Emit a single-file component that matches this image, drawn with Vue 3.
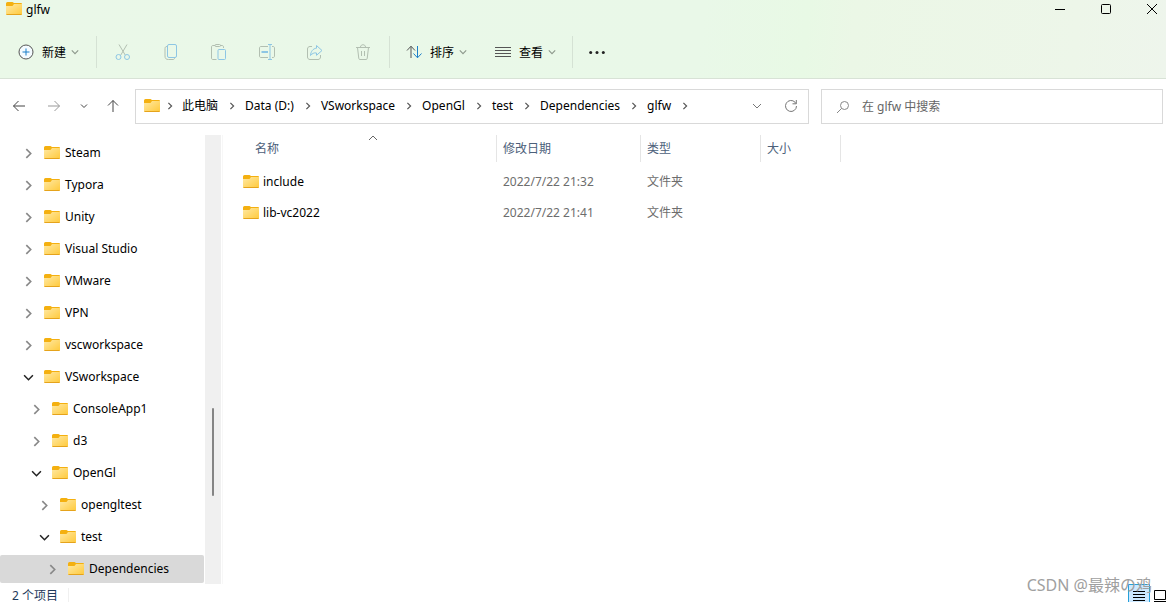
<script setup>
import { ref } from 'vue'

const query = ref('')
const crumbs = ['此电脑', 'Data (D:)', 'VSworkspace', 'OpenGl', 'test', 'Dependencies', 'glfw']

const tree = [
  { name: 'Steam', level: 0 },
  { name: 'Typora', level: 0 },
  { name: 'Unity', level: 0 },
  { name: 'Visual Studio', level: 0 },
  { name: 'VMware', level: 0 },
  { name: 'VPN', level: 0 },
  { name: 'vscworkspace', level: 0 },
  { name: 'VSworkspace', level: 0, open: true },
  { name: 'ConsoleApp1', level: 1 },
  { name: 'd3', level: 1 },
  { name: 'OpenGl', level: 1, open: true },
  { name: 'opengltest', level: 2 },
  { name: 'test', level: 2, open: true },
  { name: 'Dependencies', level: 3, selected: true },
]

const files = [
  { name: 'include', date: '2022/7/22 21:32', type: '文件夹' },
  { name: 'lib-vc2022', date: '2022/7/22 21:41', type: '文件夹' },
]
</script>

<template>
  <div class="explorer">
    <svg class="defs" aria-hidden="true">
      <defs>
        <linearGradient id="folder-front" x1="0" y1="0" x2="1" y2="1">
          <stop offset="0" stop-color="#ffe9a4" />
          <stop offset="1" stop-color="#ffc93a" />
        </linearGradient>
        <symbol id="folder" viewBox="0 0 16 14">
          <path d="M0 1.500A1.500 1.500 0 0 1 1.500 0h5L8 1h7a1 1 0 0 1 1 1v3H0z" fill="#f4b010" />
          <path d="M0 4h6.500L8 2h8v10.200a.8.8 0 0 1-.8.8H.8a.8.8 0 0 1-.8-.8z" fill="url(#folder-front)" />
          <path d="M.5 12.500h15" stroke="#e5a31c" stroke-width="1" />
        </symbol>
        <symbol id="right" viewBox="0 0 10 10">
          <path d="M3 1l4 4-4 4" fill="none" stroke="currentColor" stroke-width="1.500" />
        </symbol>
        <symbol id="down" viewBox="0 0 10 10">
          <path d="M1 3l4 4 4-4" fill="none" stroke="currentColor" stroke-width="1.400" />
        </symbol>
      </defs>
    </svg>

    <header class="top">
      <div class="titlebar">
        <svg class="folder"><use href="#folder" /></svg>
        <h1>glfw</h1>
        <div class="window-buttons">
          <button aria-label="最小化"><svg viewBox="0 0 12 12"><path d="M1 6.500h10" /></svg></button>
          <button aria-label="最大化"><svg viewBox="0 0 12 12"><rect x="1.500" y="1.500" width="9" height="9" rx="1" /></svg></button>
          <button aria-label="关闭"><svg viewBox="0 0 12 12"><path d="M1 1l10 10M11 1L1 11" /></svg></button>
        </div>
      </div>

      <div class="toolbar">
        <button class="command new">
          <svg class="icon" viewBox="0 0 16 16"><circle cx="8" cy="8" r="7" class="ink" fill="#f4fbff" /><path class="blue" d="M8 4.500v7M4.500 8h7" /></svg>
          <span>新建</span><svg class="chev"><use href="#down" /></svg>
        </button>
        <div class="group">
          <button disabled aria-label="剪切">
            <svg class="icon" viewBox="0 0 16 16"><path class="ink" d="M4 .5l6.200 10.500M12 .5L5.800 11" /><circle class="blue" cx="3.500" cy="13" r="2.500" /><circle class="blue" cx="12" cy="13" r="2.500" /></svg>
          </button>
          <button disabled aria-label="复制">
            <svg class="icon" viewBox="0 0 16 16"><path class="ink" d="M4 2.500c-1.500 0-2 .8-2 2V12c0 2.500 1 3.500 3.500 3.500H10c1 0 1.500-.5 1.500-1.500" /><rect class="blue" x="4.500" y=".5" width="9" height="13" rx="1.500" /></svg>
          </button>
          <button disabled aria-label="粘贴">
            <svg class="icon" viewBox="0 0 16 16"><path class="ink" d="M4 1.500H2c-1 0-1.500.5-1.500 1.500v11c0 1 .5 1.500 1.500 1.500h3.500M9 1.500h2c1 0 1.500.5 1.500 1.500v1" /><rect class="ink" x="4" y=".5" width="5.500" height="2" rx="1" /><rect class="blue" x="7" y="5.500" width="7.500" height="10" rx="1" /></svg>
          </button>
          <button disabled aria-label="重命名">
            <svg class="icon" viewBox="0 0 16 16"><path class="ink" d="M9 2.500H2c-1 0-1.500.6-1.500 1.500v8c0 1 .5 1.500 1.500 1.500h7M13 2.500h1c1 0 1.500.6 1.500 1.500v8c0 1-.5 1.500-1.500 1.500h-1" /><path class="blue" d="M11 .5v15M9 .5h4M9 15.500h4" /><path class="blue thick" d="M2.500 8H9" /></svg>
          </button>
          <button disabled aria-label="共享">
            <svg class="icon" viewBox="0 0 16 16"><path class="ink" d="M5 2.500H3C1.500 2.500.5 3.500.5 5v8c0 1.500 1 2.500 2.500 2.500h8c1.500 0 2.500-1 2.500-2.500v-2" /><path class="blue" d="M9.500 1.500L15 6.500l-5.500 4.800V9C7 8.500 5.200 9.500 3.500 11.500 3.800 7.500 6 4.500 9.500 4.200z" /></svg>
          </button>
          <button disabled aria-label="删除">
            <svg class="icon" viewBox="0 0 16 16"><path class="ink" d="M1 3.500h14M2.500 3.500l1.300 11c.1.700.5 1 1.200 1h6c.7 0 1.100-.3 1.200-1l1.300-11M5.500 3c0-3 5-3 5 0M6.500 7v5M9.500 7v5" /></svg>
          </button>
        </div>
        <button class="command">
          <svg class="icon" viewBox="0 0 16 16"><path class="ink" d="M5 14V2.500M1 6.500l4-4.300 4 4.300" /><path class="blue" d="M11.500 2v11.500M7.500 9.500l4 4.300 4-4.300" /></svg>
          <span>排序</span><svg class="chev"><use href="#down" /></svg>
        </button>
        <button class="command">
          <svg class="icon" viewBox="0 0 16 16"><path class="ink" d="M0 3.500h16M0 6.500h16M0 9.500h16M0 12.500h16" /></svg>
          <span>查看</span><svg class="chev"><use href="#down" /></svg>
        </button>
        <button class="more" aria-label="更多">
          <svg class="icon" viewBox="0 0 16 16"><circle cx="1.700" cy="8.500" r="1.500" /><circle cx="8" cy="8.500" r="1.500" /><circle cx="14.300" cy="8.500" r="1.500" /></svg>
        </button>
      </div>
    </header>

    <nav class="location">
      <div class="history">
        <button aria-label="后退"><svg viewBox="0 0 14 14"><path d="M13 7H1.500M6.500 2l-5 5 5 5" /></svg></button>
        <button aria-label="前进" class="faded"><svg viewBox="0 0 14 14"><path d="M1 7h11.500M7.500 2l5 5-5 5" /></svg></button>
        <button aria-label="最近位置" class="recent"><svg viewBox="0 0 14 14"><path d="M4 5.500l3 3 3-3" /></svg></button>
        <button aria-label="上移"><svg viewBox="0 0 14 14"><path d="M7 13V1.500M2 6.500l5-5 5 5" /></svg></button>
      </div>
      <div class="address">
        <svg class="folder"><use href="#folder" /></svg>
        <svg class="sep first"><use href="#right" /></svg>
        <template v-for="c in crumbs" :key="c">
          <a href="#">{{ c }}</a>
          <svg class="sep"><use href="#right" /></svg>
        </template>
        <button class="drop" aria-label="历史记录"><svg viewBox="0 0 14 14"><path d="M3 5l4 4 4-4" /></svg></button>
        <button aria-label="刷新"><svg viewBox="0 0 14 14"><path d="M12.500 7A5.500 5.500 0 1 1 11 3.200L12 4.500M12.300 1v3.800H8.500" /></svg></button>
      </div>
      <label class="search">
        <svg viewBox="0 0 14 14"><circle cx="8.500" cy="5.500" r="4" /><path d="M5.500 8.500L1 13" /></svg>
        <input v-model="query" type="text" aria-label="搜索" placeholder="在 glfw 中搜索" />
      </label>
    </nav>

    <main class="content">
      <aside class="sidebar">
        <ul class="tree">
          <li v-for="n in tree" :key="n.name + n.level">
            <button :class="['node', 'level-' + n.level, { open: n.open, selected: n.selected }]">
              <svg class="twist"><use :href="n.open ? '#down' : '#right'" /></svg>
              <svg class="folder"><use href="#folder" /></svg>
              <span>{{ n.name }}</span>
            </button>
          </li>
        </ul>
        <div class="scrollbar"><div class="thumb"></div></div>
      </aside>

      <section class="listing">
        <svg class="sort-mark" viewBox="0 0 10 6"><path d="M1 5l4-4 4 4" /></svg>
        <table>
          <colgroup><col class="c-name" /><col class="c-date" /><col class="c-type" /><col class="c-size" /></colgroup>
          <thead>
            <tr><th>名称</th><th>修改日期</th><th>类型</th><th>大小</th></tr>
          </thead>
          <tbody>
            <tr v-for="f in files" :key="f.name">
              <td><div class="file"><svg class="folder"><use href="#folder" /></svg>{{ f.name }}</div></td>
              <td>{{ f.date }}</td>
              <td>{{ f.type }}</td>
              <td></td>
            </tr>
          </tbody>
        </table>
      </section>
    </main>

    <footer class="status">
      <span class="count">2 个项目</span>
      <div class="views">
        <button class="active" aria-label="详细信息"><svg viewBox="0 0 12 12"><path d="M0 1.500h12M0 4.500h12M0 7.500h12M0 10.500h12" /></svg></button>
        <button aria-label="大图标"><svg viewBox="0 0 12 12"><path d="M.5 .5h11v9H.5zM0 11.500h12" /></svg></button>
      </div>
      <span class="watermark">CSDN @最辣の鸡</span>
    </footer>
  </div>
</template>

<style>
body { margin: 0; background: #fff; overflow: hidden; }
</style>

<style scoped>
.explorer {
  display: flex;
  flex-direction: column;
  height: 100vh;
  color: #000;
  font: 12px/16px "Noto Sans", "Noto Sans CJK SC", sans-serif;
}
button {
  display: flex;
  align-items: center;
  padding: 0;
  border: 0;
  background: none;
  color: inherit;
  font: inherit;
}
svg { flex: none; fill: none; stroke: currentColor; }
.defs { position: absolute; width: 0; height: 0; }
.folder { width: 16px; height: 14px; stroke: none; }
.icon { width: 16px; height: 16px; }

.top {
  flex: none;
  border-bottom: 1px solid #d8e2d6;
  background: linear-gradient(95deg, #eaf8e8 0%, #e9f8e8 60%, #e8f9e5 69%, #ebf7e6 73%, #edf6e9 92%, #eef5ec 100%);
}
.titlebar { display: flex; align-items: center; height: 18px; padding-left: 6px; }
h1 { margin: 0 0 0 4px; padding-top: 1px; font-size: 12px; font-weight: 400; }
.window-buttons { display: flex; gap: 34px; margin-left: auto; padding-right: 8px; color: #000; }
.window-buttons svg { width: 12px; height: 12px; }

.toolbar { display: flex; align-items: center; height: 60px; }
.toolbar > * { height: 32px; margin-top: 8px; }
.command { gap: 8px; margin-right: 28px; }
.command span { padding-top: 2px; }
.command.new { padding: 0 17px 0 18px; margin-right: 0; border-right: 1px solid #d5e2d4; }
.command .chev { width: 8px; height: 8px; margin-left: -3px; color: #8d988c; }
.ink { stroke: #555; }
.blue { stroke: #1b7fc9; }
.thick { stroke-width: 2; }
.group { display: flex; gap: 32px; padding: 0 18px; margin-right: 16px; border-right: 1px solid #d5e2d4; }
.group .ink { stroke: #b2bfb1; }
.group .blue { stroke: #8dc6e4; }
.more { padding-left: 16px; margin-left: -12px; border-left: 1px solid #d5e2d4; color: #222; }
.more svg { fill: currentColor; stroke: none; }

.location { display: flex; flex: none; height: 35px; padding: 10px 3px 11px 12px; }
.history { display: flex; align-items: center; box-sizing: border-box; width: 123px; padding-bottom: 2px; color: #444; }
.history svg, .address button svg, .search svg { width: 14px; height: 14px; }
.history button { margin-right: 21px; }
.history .faded { color: #999; margin-right: 16px; }
.history .recent { margin-right: 15px; }
.address, .search {
  display: flex;
  align-items: center;
  box-sizing: border-box;
  border: 1px solid #d9d9d9;
}
.address { flex: 1; min-width: 0; padding: 0 10px 1px 8px; }
.address a { color: #000; text-decoration: none; white-space: nowrap; }
.sep { width: 8px; height: 8px; margin: 0 9px 0 10px; color: #555; }
.sep.first { margin: 0 8px 0 6px; }
.address button { color: #777; }
.address .drop { margin: 0 20px 0 auto; }
.search { flex: 0 1 342px; margin-left: 12px; padding-left: 14px; color: #888; }
.search input {
  flex: 1;
  min-width: 0;
  margin-left: 12px;
  padding: 0;
  border: 0;
  outline: 0;
  background: none;
  color: #000;
  font: inherit;
}
.search input::placeholder { color: #666; opacity: 1; }

.content { display: flex; flex: 1; min-height: 0; }
.sidebar { display: flex; flex: none; width: 222px; border-right: 1px solid #f7f7f7; }
.tree {
  display: flex;
  flex: 1;
  flex-direction: column;
  gap: 4px;
  margin: 0;
  padding: 4px 1px 0 0;
  list-style: none;
}
.node { width: 100%; height: 28px; border-radius: 2px; }
.node.selected { background: #d9d9d9; }
.level-0 { padding-left: 23px; }
.level-1 { padding-left: 31px; }
.level-2 { padding-left: 39px; }
.level-3 { padding-left: 47px; }
.twist { width: 11px; height: 11px; margin-right: 10px; color: #888; }
.open .twist { color: #222; }
.node span { margin-left: 5px; }
.scrollbar { width: 16px; margin-right: 1px; background: #f0f0f0; }
.thumb { width: 2px; height: 88px; margin: 273px 0 0 7px; border-radius: 1px; background: #858585; }

.listing { position: relative; flex: 1; min-width: 0; }
.sort-mark { position: absolute; top: 0; left: 145px; width: 10px; height: 6px; color: #666; }
table { table-layout: fixed; width: 618px; border-collapse: separate; border-spacing: 0; }
.c-name { width: 274px; }
.c-date { width: 144px; }
.c-type { width: 120px; }
.c-size { width: 80px; }
th, td { padding: 0 0 0 6px; text-align: left; font-weight: 400; color: #6d6d6d; }
th { height: 27px; border-right: 1px solid #e5e5e5; color: #4c607a; }
th:first-child { padding-left: 32px; }
td { height: 31px; }
td:first-child { padding-left: 20px; }
tbody::before { display: block; height: 4px; content: ""; }
.file { display: flex; align-items: center; gap: 4px; color: #000; }

.status { position: relative; display: flex; flex: none; height: 18px; }
.count { height: 14px; margin-top: 4px; padding: 0 10px 0 12px; border-right: 1px solid #f0f0f0; color: #1e395b; }
.views { display: flex; gap: 4px; margin-left: auto; color: #000; }
.views svg { width: 12px; height: 12px; margin-top: 5px; }
.views .active { padding: 0 4px; border: 1px solid #26a0da; border-bottom: 0; background: #cce8ff; }
.watermark { position: absolute; right: 14px; bottom: 5px; color: #a0a0a0; font-size: 16px; line-height: 24px; white-space: nowrap; }
</style>
